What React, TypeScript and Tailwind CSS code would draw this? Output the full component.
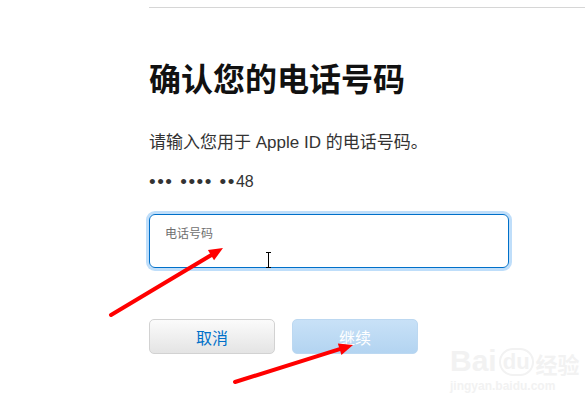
import { Fragment } from 'react';

const cjk = '"Noto Sans CJK SC", sans-serif';
const body = '"Liberation Sans", "Noto Sans CJK SC", sans-serif';

function Arrow({ x1, y1, x2, y2 }: { x1: number; y1: number; x2: number; y2: number }) {
  const a = Math.atan2(y2 - y1, x2 - x1);
  const len = 14;
  const w = 6;
  const bx = x2 - len * Math.cos(a);
  const by = y2 - len * Math.sin(a);
  const px = -Math.sin(a) * w;
  const py = Math.cos(a) * w;
  return (
    <Fragment>
      <line x1={x1} y1={y1} x2={bx} y2={by} stroke="#f00" strokeWidth={4} strokeLinecap="round" />
      <polygon points={`${x2},${y2} ${bx + px},${by + py} ${bx - px},${by - py}`} fill="#f00" />
    </Fragment>
  );
}

export default function App() {
  return (
    <div className="relative w-[585px] h-[407px] overflow-hidden bg-white pl-[149px] pt-[7px]" style={{ fontFamily: body }}>
      <div className="h-px bg-[#d6d6d6]" />

      <h1 className="mt-[53px] text-[32px] leading-[32px] font-bold text-[#111]" style={{ fontFamily: cjk }}>
        确认您的电话号码
      </h1>

      <p className="mt-[40px] text-[17px] leading-[20px] text-[#333]">请输入您用于 Apple ID 的电话号码。</p>
      <p className="mt-[19px] h-[20px] flex items-center text-[#333]">
        <span className="text-[19px] leading-[20px] tracking-[1.5px]">••• •••• ••</span>
        <span className="text-[16px] leading-[20px]">48</span>
      </p>

      <div className="mt-[22px] w-[360px] h-[54px] rounded-[6px] border border-[#0070c9] shadow-[0_0_0_3px_#bfdefa] px-[15px] pt-[6px]">
        <span className="text-[12px] leading-[16px] text-[#6f6f6f]" style={{ fontFamily: cjk }}>电话号码</span>
      </div>

      <div className="mt-[51px] flex gap-[17px]">
        <button className="w-[126px] h-[35px] rounded-[5px] border border-[#d2d2d2] bg-gradient-to-b from-[#fbfbfb] to-[#e4e4e4] text-[16px] text-[#0070c9]" style={{ fontFamily: cjk }}>
          取消
        </button>
        <button className="w-[126px] h-[35px] rounded-[5px] border border-[#bcd8f1] bg-gradient-to-b from-[#c8e1f7] to-[#b3d4f1] text-[16px] text-white" style={{ fontFamily: cjk }}>
          继续
        </button>
      </div>

      {/* watermark */}
      <div className="absolute left-[450px] top-[346px] text-[#f2f2f2] select-none">
        <div className="flex items-end gap-[2px] text-[30px] leading-[30px] font-bold" style={{ fontFamily: body }}>
          <span>Bai</span>
          <span className="text-[22px] leading-[24px] rounded-full border-2 border-[#f2f2f2] px-[2px]">du</span>
          <span className="text-[22px] leading-[26px]" style={{ fontFamily: cjk }}>经验</span>
        </div>
        <div className="text-[12px] leading-[14px] mt-[3px] font-bold">jingyan.baidu.com</div>
      </div>

      {/* annotations + cursor */}
      <svg className="absolute left-0 top-0" width={585} height={407}>
        <Arrow x1={111} y1={315} x2={223} y2={248} />
        <Arrow x1={235} y1={382} x2={353} y2={345} />
        <g stroke="#000" strokeWidth={1} fill="none">
          <line x1={268.5} y1={253} x2={268.5} y2={267} />
          <line x1={266} y1={252.5} x2={271} y2={252.5} />
          <line x1={266} y1={267.5} x2={271} y2={267.5} />
        </g>
      </svg>
    </div>
  );
}
